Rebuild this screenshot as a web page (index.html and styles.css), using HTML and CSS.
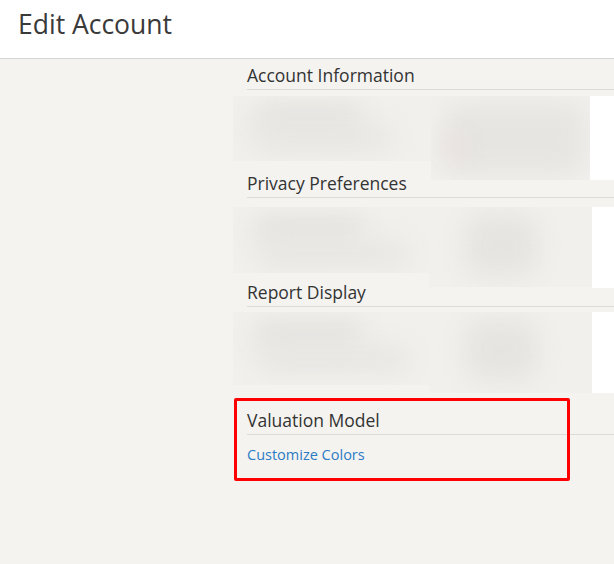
FILE: index.html
```html
<!DOCTYPE html>
<html>
<head>
<meta charset="utf-8">
<link rel="stylesheet" href="styles.css">
</head>
<body>
<header class="topbar">
  <h1 class="title">Edit Account</h1>
</header>
<main class="content">
  <section class="section">
    <h2 class="section-title">Account Information</h2>
    <div class="blur-row row-1">
      <div class="blur-cell cell-a"><span class="smudge s1"></span><span class="smudge s2"></span></div>
      <div class="blur-cell cell-b"><span class="smudge s3"></span><span class="smudge red"></span></div>
      <div class="white-card"></div>
    </div>
  </section>
  <section class="section">
    <h2 class="section-title">Privacy Preferences</h2>
    <div class="blur-row row-2">
      <div class="blur-cell cell-a"><span class="smudge s1"></span><span class="smudge s4"></span></div>
      <div class="blur-cell cell-b"><span class="smudge s5"></span></div>
      <div class="white-card"></div>
    </div>
  </section>
  <section class="section">
    <h2 class="section-title">Report Display</h2>
    <div class="blur-row row-3">
      <div class="blur-cell cell-a"><span class="smudge s1"></span><span class="smudge s4"></span></div>
      <div class="blur-cell cell-b"><span class="smudge s5"></span></div>
      <div class="white-card"></div>
    </div>
  </section>
  <section class="section valuation">
    <h2 class="section-title">Valuation Model</h2>
    <a class="link" href="#">Customize Colors</a>
    <div class="highlight"></div>
  </section>
</main>
</body>
</html>
```
FILE: styles.css
```css
html, body {
  margin: 0;
  padding: 0;
}
body {
  background: #f4f3f0;
  font-family: "Open Sans", "Noto Sans", sans-serif;
  color: #333;
  width: 614px;
  height: 564px;
  overflow: hidden;
}
.topbar {
  background: #fff;
  height: 59px;
  border-bottom: 1px solid #d4d4d4;
  box-sizing: border-box;
  padding-left: 18px;
}
.title {
  margin: 0;
  font-weight: 400;
  font-size: 26.5px;
  line-height: 48px;
  color: #3a3a3a;
}
.content {
  padding-left: 247px;
  padding-top: 4px;
}
.section {
  position: relative;
}
.section-title {
  margin: 0;
  font-size: 17.5px;
  font-weight: 400;
  line-height: 25px;
  color: #333;
  border-bottom: 1px solid #dcdbd8;
  padding-bottom: 1px;
}
.blur-row {
  display: flex;
  margin-left: -14px;
  margin-top: 6px;
}
.row-1 { height: 75px; }
.row-2 { height: 73px; margin-top: 9px; }
.row-3 { height: 77px; margin-top: 5px; }
.blur-cell {
  position: relative;
  overflow: hidden;
}
.cell-a {
  width: 198px;
  height: 65px;
  background: #f1f0ed;
}
.cell-b {
  width: 159px;
  height: 84px;
  background: #f1f0ed;
}
.row-2 .cell-a { height: 66px; width: 196px; }
.row-2 .cell-b { height: 80px; width: 163px; }
.row-3 .cell-a { height: 73px; width: 196px; }
.row-3 .cell-b { height: 81px; width: 163px; }
.white-card {
  flex: 1;
  height: 84px;
  background: #fff;
}
.row-2 .white-card { height: 81px; }
.row-3 .white-card { height: 81px; }
.smudge {
  position: absolute;
  display: block;
  background: #e4e3e0;
  filter: blur(12px);
  border-radius: 16px;
}
.s1 { left: 20px; top: 8px; width: 110px; height: 30px; }
.s2 { left: 20px; top: 30px; width: 140px; height: 24px; background: #e7e6e3; }
.s3 { left: 14px; top: 8px; width: 140px; height: 70px; background: #e6e5e2; }
.red { left: 14px; top: 40px; width: 18px; height: 22px; background: #ecdcda; }
.s4 { left: 26px; top: 34px; width: 150px; height: 26px; background: #e7e6e3; }
.s5 { left: 36px; top: 8px; width: 72px; height: 60px; background: #e5e4e1; }
.valuation {
  margin-top: 19px;
}
.link {
  display: block;
  margin-top: 10px;
  font-size: 14.5px;
  color: #2c7bc4;
  text-decoration: none;
  line-height: 20px;
}
.highlight {
  position: absolute;
  left: -13px;
  top: -10px;
  width: 330px;
  height: 77px;
  border: 3px solid #ff0000;
  border-radius: 2px;
  pointer-events: none;
}
```
